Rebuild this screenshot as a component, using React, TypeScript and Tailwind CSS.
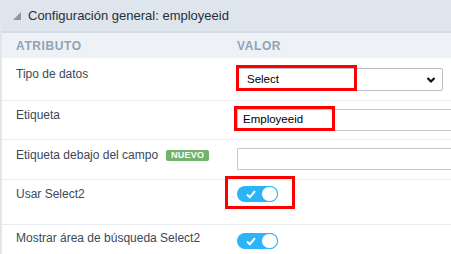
export default function App() {
  const font = { fontFamily: '"Liberation Sans", Arial, sans-serif' };

  return (
    <div style={font} className="w-[451px] h-[254px] overflow-hidden bg-white">
      <div className="border-l-2 border-[#e1e6ec] h-full">
        {/* panel header */}
        <div className="h-[33px] bg-[#dfe5ec] flex items-center pl-[11px] gap-[7px] border-b-2 border-[#d3dbe4]">
          <svg width="8" height="8" viewBox="0 0 8 8" className="mt-[1px]">
            <polygon points="8,0 8,8 0,8" fill="#8c96a2" />
          </svg>
          <span className="text-[13px] text-[#23303e]">Configuración general: employeeid</span>
        </div>

        {/* column header */}
        <div className="h-[25px] bg-[#eef2f6] flex items-center text-[12px] font-semibold tracking-[0.6px] text-[#90a3b6]">
          <div className="w-[235px] shrink-0 pl-[14px]">ATRIBUTO</div>
          <div>VALOR</div>
        </div>

        <Row label="Tipo de datos" className="h-[43px]" labelPt="pt-[8px]" valuePt="pt-[10px]">
          <div className="relative">
            <div className="w-[206px] h-[23px] border border-[#b7bec6] rounded-[2px] flex items-center justify-between pl-[9px] pr-[6px] text-[11.5px] text-black">
              <span>Select</span>
              <svg width="10" height="8" viewBox="0 0 10 8">
                <path d="M1.5 2 L5 5.5 L8.5 2" stroke="#111" strokeWidth="2.2" fill="none" />
              </svg>
            </div>
            <div className="absolute left-[-1px] top-[-3px] w-[121px] h-[26px] border-[3px] border-[#ff0000]" />
          </div>
        </Row>

        <Row label="Etiqueta" className="h-[39px]" labelPt="pt-[6px]" valuePt="pt-[8px]">
          <div className="relative">
            <div className="w-[214px] h-[22px] border border-[#c3c9d0] border-r-0 flex items-center pl-[5px] text-[11.5px] text-black">
              Employeeid
            </div>
            <div className="absolute left-[-3px] top-[-3px] w-[101px] h-[25px] border-[3px] border-[#ff0000]" />
          </div>
        </Row>

        <Row
          label={
            <span className="flex items-center gap-[8px]">
              Etiqueta debajo del campo
              <span className="bg-[#71b26e] text-white text-[9px] font-bold leading-none px-[5px] py-[1px] rounded-[2px] tracking-[0.2px]">
                NUEVO
              </span>
            </span>
          }
          className="h-[40px]"
          labelPt="pt-[7px]"
          valuePt="pt-[8px]"
        >
          <div className="w-[214px] h-[22px] border border-[#c3c9d0] border-r-0 rounded-l-[2px]" />
        </Row>

        <Row label="Usar Select2" className="h-[45px]" labelPt="pt-[6px]" valuePt="pt-[6px]">
          <div className="relative w-[41px]">
            <Toggle />
            <div className="absolute left-[-12px] top-[-10px] w-[70px] h-[33px] border-[3px] border-[#ff0000]" />
          </div>
        </Row>

        <Row label="Mostrar área de búsqueda Select2" className="h-[27px]" labelPt="pt-[5px]" valuePt="pt-[8px]" last>
          <Toggle />
        </Row>
      </div>
    </div>
  );
}

function Row({
  label,
  children,
  className,
  labelPt,
  valuePt,
  last,
}: {
  label: React.ReactNode;
  children: React.ReactNode;
  className: string;
  labelPt: string;
  valuePt: string;
  last?: boolean;
}) {
  return (
    <div className={`flex ${last ? "" : "border-b border-[#e8ecf1]"} ${className}`}>
      <div className={`w-[235px] shrink-0 pl-[14px] text-[12px] leading-[16px] text-[#3c4856] ${labelPt}`}>
        {label}
      </div>
      <div className={`flex-1 min-w-0 ${valuePt}`}>{children}</div>
    </div>
  );
}

function Toggle() {
  return (
    <div className="w-[41px] h-[16px] rounded-full bg-[#2bb4f6] relative">
      <svg width="10" height="9" viewBox="0 0 10 9" className="absolute left-[9px] top-[4px]">
        <path d="M1 4.5 L3.8 7.2 L9 1.2" stroke="#fff" strokeWidth="2" fill="none" />
      </svg>
      <div className="absolute right-0 top-0 w-[17px] h-[16px] rounded-full bg-white border-[1.5px] border-[#2bb4f6]" />
    </div>
  );
}
